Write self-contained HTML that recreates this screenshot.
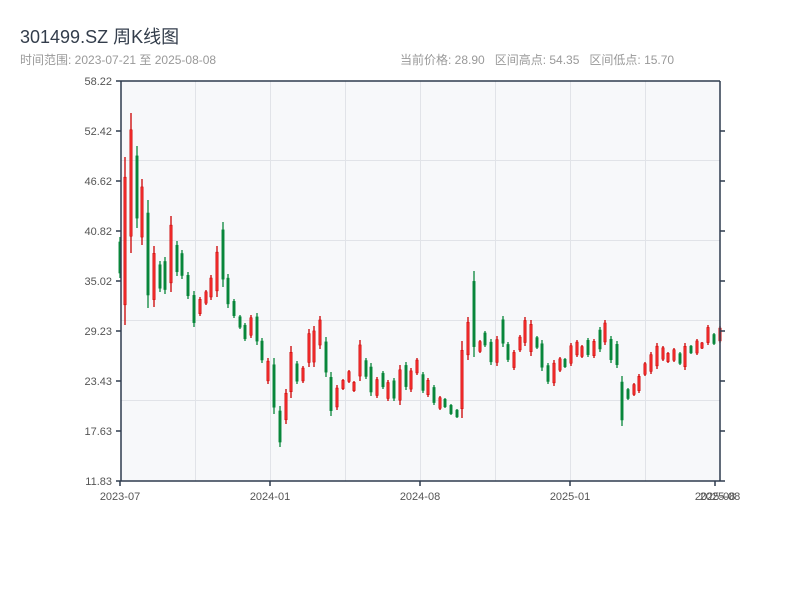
<!DOCTYPE html>
<html><head><meta charset="utf-8">
<style>
body{margin:0;width:800px;height:600px;background:#fff;overflow:hidden;font-family:"Liberation Sans","Noto Sans CJK SC",sans-serif;position:relative}
.t{position:absolute;left:20px;top:23px;font-size:18px;color:#333d4b}
.s{position:absolute;top:51px;font-size:12px;color:#999;white-space:nowrap}
svg{position:absolute;left:0;top:0}
</style></head><body>
<div class="t">301499.SZ 周K线图</div>
<div class="s" style="left:20px">时间范围: 2023-07-21 至 2025-08-08</div>
<div class="s" style="left:400px">当前价格: 28.90&nbsp;&nbsp;&nbsp;区间高点: 54.35&nbsp;&nbsp;&nbsp;区间低点: 15.70</div>
<svg width="800" height="600" id="c" font-family="Liberation Sans, sans-serif" font-size="11" fill="#555">
<rect x="121" y="81" width="599" height="400" fill="#f7f8fa"/>
<g stroke="#e1e3e8" stroke-width="1">
<line x1="195.5" y1="81" x2="195.5" y2="481"/><line x1="270.5" y1="81" x2="270.5" y2="481"/><line x1="345.5" y1="81" x2="345.5" y2="481"/><line x1="420.5" y1="81" x2="420.5" y2="481"/><line x1="495.5" y1="81" x2="495.5" y2="481"/><line x1="570.5" y1="81" x2="570.5" y2="481"/><line x1="645.5" y1="81" x2="645.5" y2="481"/>
<line x1="121" y1="160.5" x2="720" y2="160.5"/><line x1="121" y1="240.5" x2="720" y2="240.5"/><line x1="121" y1="320.5" x2="720" y2="320.5"/><line x1="121" y1="400.5" x2="720" y2="400.5"/>
</g>
<g id="k"></g>
<g stroke="#2e3b4e" stroke-width="1.5">
<line x1="121" y1="81" x2="720" y2="81"/><line x1="121" y1="81" x2="121" y2="481"/><line x1="720" y1="81" x2="720" y2="481"/><line x1="116" y1="481" x2="725" y2="481"/>
<line x1="116" y1="81" x2="121" y2="81"/><line x1="116" y1="131" x2="121" y2="131"/><line x1="116" y1="181" x2="121" y2="181"/><line x1="116" y1="231" x2="121" y2="231"/><line x1="116" y1="281" x2="121" y2="281"/><line x1="116" y1="331" x2="121" y2="331"/><line x1="116" y1="381" x2="121" y2="381"/><line x1="116" y1="431" x2="121" y2="431"/>
<line x1="720" y1="131" x2="725" y2="131"/><line x1="720" y1="181" x2="725" y2="181"/><line x1="720" y1="231" x2="725" y2="231"/><line x1="720" y1="281" x2="725" y2="281"/><line x1="720" y1="331" x2="725" y2="331"/><line x1="720" y1="381" x2="725" y2="381"/><line x1="720" y1="431" x2="725" y2="431"/>
<line x1="120" y1="481" x2="120" y2="486"/><line x1="270" y1="481" x2="270" y2="486"/><line x1="420" y1="481" x2="420" y2="486"/><line x1="570" y1="481" x2="570" y2="486"/><line x1="715" y1="481" x2="715" y2="486"/>
</g>
<g text-anchor="end"><text x="112" y="85">58.22</text><text x="112" y="135">52.42</text><text x="112" y="185">46.62</text><text x="112" y="235">40.82</text><text x="112" y="285">35.02</text><text x="112" y="335">29.23</text><text x="112" y="385">23.43</text><text x="112" y="435">17.63</text><text x="112" y="485">11.83</text></g>
<g text-anchor="middle"><text x="120" y="500">2023-07</text><text x="270" y="500">2024-01</text><text x="420" y="500">2024-08</text><text x="570" y="500">2025-01</text><text x="715" y="500">2025-08</text><text x="720" y="500">2025-08</text></g>
</svg>
<script>
var d=[[120,237,278,'g'],[125,157,325,'r'],[131,113,253,'r'],[137,146,228,'g'],[142,179,245,'r'],[148,200,308,'g'],[154,246,307,'r'],[160,261,292,'g'],[165,257,294,'g'],[171,216,292,'r'],[177,241,276,'g'],[182,250,279,'g'],[188,272,299,'g'],[194,291,327,'g'],[200,297,316,'r'],[206,290,305,'r'],[211,275,300,'r'],[217,246,297,'r'],[223,222,287,'g'],[228,274,308,'g'],[234,299,318,'g'],[240,315,329,'g'],[245,323,341,'g'],[251,315,338,'r'],[257,313,345,'g'],[262,338,363,'g'],[268,358,384,'r'],[274,358,414,'g'],[280,406,447,'g'],[286,389,424,'r'],[291,346,398,'r'],[297,361,384,'g'],[303,366,383,'r'],[309,329,367,'r'],[314,326,367,'r'],[320,316,349,'r'],[326,337,377,'g'],[331,372,416,'g'],[337,385,410,'r'],[343,379,390,'r'],[349,370,383,'r'],[354,381,392,'r'],[360,340,381,'r'],[366,358,379,'g'],[371,363,396,'g'],[377,377,398,'r'],[383,371,389,'g'],[388,380,401,'r'],[394,378,401,'g'],[400,365,405,'r'],[406,362,390,'g'],[411,368,392,'r'],[417,358,375,'r'],[423,372,393,'g'],[428,378,397,'r'],[434,385,405,'g'],[440,396,410,'r'],[445,398,408,'g'],[451,404,415,'g'],[457,409,418,'g'],[462,341,418,'r'],[468,317,360,'r'],[474,271,357,'g'],[480,340,353,'r'],[485,331,347,'g'],[491,339,365,'g'],[497,336,366,'r'],[503,316,347,'g'],[508,342,362,'g'],[514,350,370,'r'],[520,335,352,'r'],[525,317,346,'r'],[531,320,356,'r'],[537,336,349,'g'],[542,340,371,'g'],[548,363,384,'g'],[554,360,386,'r'],[560,357,372,'r'],[565,358,368,'g'],[571,343,366,'r'],[577,340,357,'r'],[582,345,358,'r'],[588,338,357,'g'],[594,339,358,'r'],[600,327,352,'g'],[605,320,345,'r'],[611,336,363,'g'],[617,341,368,'g'],[622,376,426,'g'],[628,388,400,'g'],[634,383,396,'r'],[639,374,393,'r'],[645,362,376,'r'],[651,352,374,'r'],[657,343,369,'r'],[663,346,361,'r'],[668,352,363,'r'],[674,348,362,'r'],[680,352,365,'g'],[685,343,370,'r'],[691,345,354,'g'],[697,339,355,'r'],[702,342,349,'r'],[708,325,345,'r'],[714,333,345,'g'],[720,326,343,'r']];
var s='';d.forEach(function(c){var x=c[0],h=c[1],l=c[2],r=c[3]=='r',L=l-h,bt=h+L*0.12,bb=l-L*0.12;
var col=r?'#cc0000':'#08873a';
s+='<line x1="'+x+'" y1="'+h+'" x2="'+x+'" y2="'+l+'" stroke="'+col+'" stroke-width="1.3"/>';
s+='<rect x="'+(x-1.2)+'" y="'+bt+'" width="2.4" height="'+Math.max(2,bb-bt)+'" fill="'+(r?'#f02a2a':'#08873a')+'" stroke="'+col+'" stroke-width="0.5"/>';});
document.getElementById('k').innerHTML=s;
</script>
</body></html>
